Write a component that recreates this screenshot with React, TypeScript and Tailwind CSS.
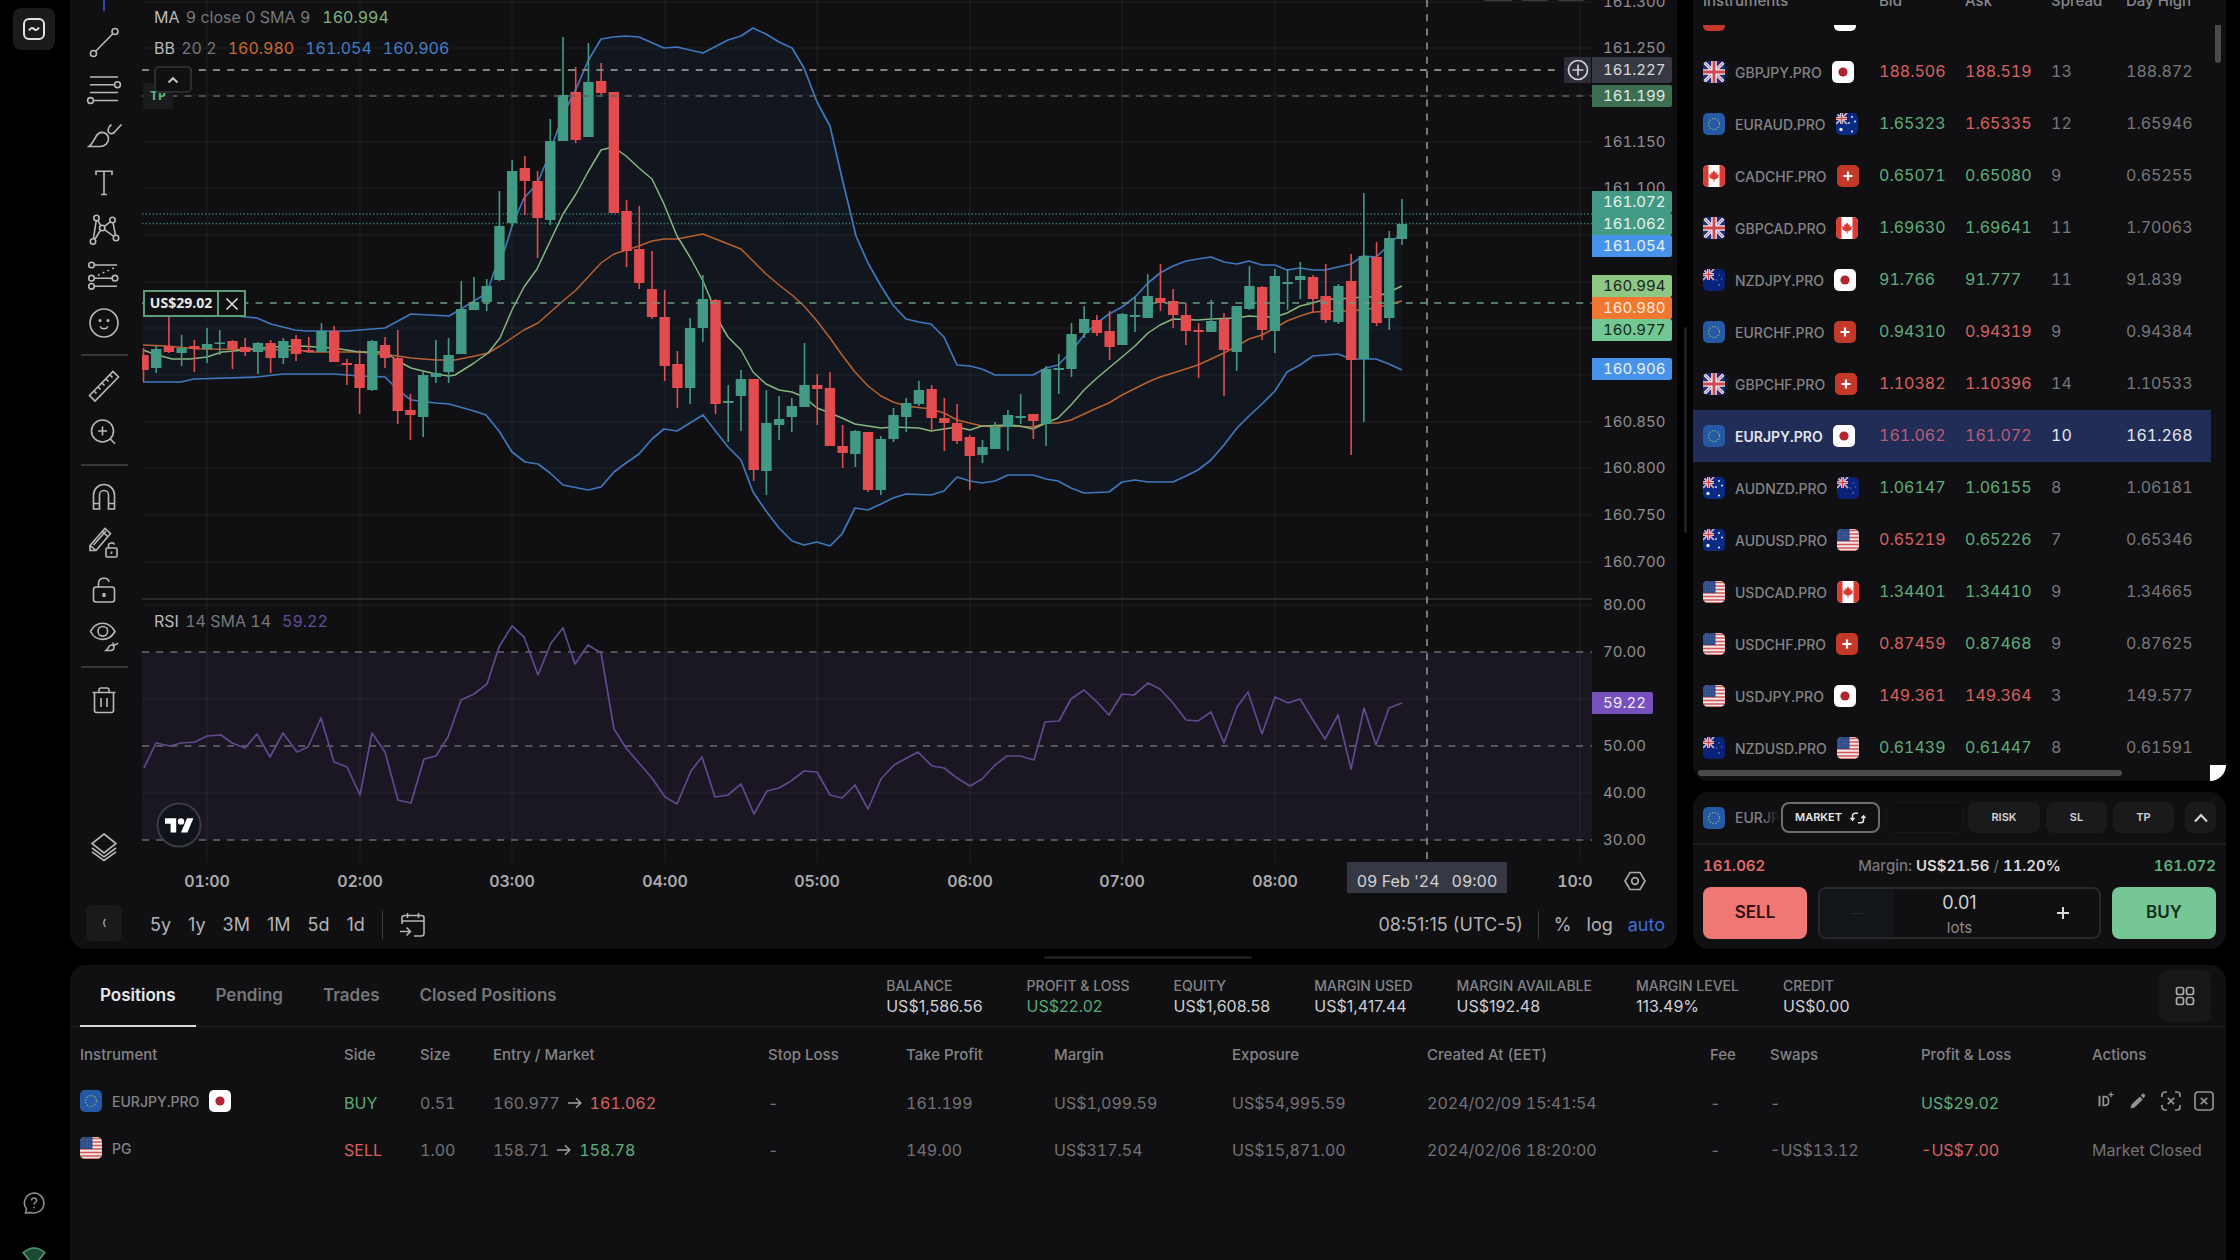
import type { ReactNode } from "react";

/* ------------------------------------------------------------------ */
/* Chart data                                                          */
/* ------------------------------------------------------------------ */

const UP = "#439a84";
const DOWN = "#e24c4f";

// [direction, body top, body bottom, wick top, wick bottom]
const candles: [0 | 1, number, number, number, number][] = [
  [0, 355, 370, 348, 382], [1, 349, 368, 346, 373], [0, 346, 352, 317, 353], [1, 348, 353, 335, 366],
  [0, 346, 349, 340, 372], [1, 344, 349, 328, 363], [1, 342.5, 344, 330, 355], [0, 341, 349, 340, 369],
  [0, 347, 352, 338, 356], [1, 343, 352, 342, 374], [0, 343, 358, 340, 373], [1, 341, 358, 338, 364],
  [0, 339, 354, 335, 361], [0, 350, 352, 337, 352], [1, 331, 352, 323, 352], [0, 331, 362, 326, 362],
  [0, 363, 365, 359, 385], [0, 364, 388, 350, 414], [1, 341, 390, 340, 391], [0, 345, 358, 337, 368],
  [0, 358, 411, 330, 424], [0, 410, 415, 394, 440], [1, 375, 417, 372, 437], [1, 373, 377, 340, 383],
  [1, 355, 372, 338, 383], [1, 309, 354, 281, 354], [1, 302, 310, 277, 310], [1, 286, 302, 279, 311],
  [1, 226, 280, 191, 281], [1, 171, 223, 160, 227], [0, 168, 181, 156, 215], [0, 181, 218, 171, 258],
  [1, 141, 220, 119, 225], [1, 95, 141, 37, 141], [0, 92, 140, 67, 143], [1, 82, 137, 43, 137],
  [0, 81, 93, 63, 95], [0, 92, 213, 92, 213], [0, 211, 251, 200, 267], [0, 249, 283, 206, 289],
  [0, 289, 317, 251, 319], [0, 317, 366, 290, 381], [0, 364, 388, 351, 408], [1, 328, 388, 318, 404],
  [1, 299, 328, 275, 342], [0, 300, 404, 299, 414], [1, 401, 403, 385, 442], [1, 379, 396, 370, 431],
  [0, 379, 470, 379, 481], [1, 423, 471, 390, 495], [1, 419, 425, 396, 440], [1, 406, 417, 398, 432],
  [1, 385, 407, 343, 407], [0, 385, 389, 374, 425], [0, 388, 446, 372, 446], [0, 446, 453, 425, 468],
  [1, 431, 454, 430, 467], [0, 432, 490, 432, 492], [1, 439, 490, 436, 495], [1, 415, 439, 408, 442],
  [1, 403, 417, 398, 432], [1, 390, 404, 381, 406], [0, 389, 418, 385, 431], [0, 418, 423, 398, 451],
  [0, 423, 441, 404, 444], [0, 437, 456, 435, 490], [1, 447, 455, 440, 463], [1, 427, 449, 422, 449],
  [1, 415, 427, 410, 451], [1, 416, 418, 394, 424], [0, 414, 421, 414, 439], [1, 369, 424, 366, 446],
  [1, 368, 370, 354, 394], [1, 334, 369, 323, 377], [1, 319, 333, 306, 338], [0, 320, 333, 315, 336],
  [0, 331, 347, 311, 360], [1, 314, 345, 313, 345], [1, 315, 317, 297, 332], [1, 296, 318, 274, 318],
  [0, 298, 303, 264, 311], [0, 301, 315, 289, 328], [0, 315, 331, 303, 345], [0, 330, 332, 323, 378],
  [1, 321, 332, 300, 332], [0, 319, 350, 313, 396], [1, 306, 352, 306, 371], [1, 286, 309, 266, 310],
  [0, 287, 330, 286, 340], [1, 276, 331, 269, 353], [1, 282, 284, 269, 310], [1, 276, 280, 262, 299],
  [0, 277, 299, 275, 313], [0, 296, 320, 264, 323], [1, 286, 322, 284, 324], [0, 281, 360, 254, 455],
  [1, 256, 359, 193, 422], [0, 257, 323, 242, 326], [1, 238, 318, 231, 330], [1, 224, 239, 199, 245],
];

const bandUpper =
  "143,313 200,313 246,317 257,318 271,324 295,330 307,331 347,331 385,328 398,321 411,314 449,316 461,309 487,293 494,272 505,249 512,226 524,198 537,184 545,165 563,115 576,89 588,61 601,39 613,37 626,36 639,37 664,48 677,47 703,53 728,40 741,36 753,28 766,34 779,42 792,48 804,68 817,102 830,126 842,178 856,236 868,263 881,286 893,305 906,319 919,322 931,324 944,337 957,365 970,366 982,369 995,375 1033,375 1046,368 1058,365 1071,352 1084,335 1097,323 1109,314 1122,307 1135,297 1148,283 1160,273 1173,266 1186,261 1198,259 1211,257 1224,262 1237,264 1249,261 1262,265 1275,265 1287,270 1300,268 1313,270 1325,270 1338,267 1351,264 1363,256 1376,257 1389,245 1402,232";
const bandLower =
  "1402,370 1389,364 1376,359 1351,359 1338,354 1313,356 1300,365 1287,372 1275,391 1262,404 1249,416 1237,428 1224,445 1211,460 1198,470 1186,476 1173,482 1148,482 1135,480 1122,482 1109,492 1084,493 1071,488 1058,481 1046,479 1033,475 1008,475 995,481 982,483 970,481 957,477 944,491 931,495 906,494 893,498 881,504 868,510 855,508 842,534 830,546 817,542 804,545 792,541 779,528 766,511 753,492 741,460 728,447 703,415 677,431 664,429 652,439 639,454 626,463 614,472 601,487 588,490 563,485 550,473 538,464 525,462 512,452 499,431 486,415 474,411 449,404 436,403 411,400 398,390 385,377 359,376 334,374 283,374 257,377 194,379 181,382 143,382";
const basisLine =
  "143,345 166,346 200,349 300,350 308,352 360,352 398,356 411,358 436,360 455,360 475,356 488,353 500,346 524,330 538,323 563,301 576,290 601,263 614,254 639,246 652,241 664,239 677,239 703,234 741,249 766,274 779,285 792,295 804,306 817,321 830,338 842,355 855,372 868,386 881,396 893,402 906,406 931,409 944,413 957,420 982,426 995,427 1008,426 1033,427 1046,423 1058,423 1071,420 1084,414 1097,408 1109,403 1122,395 1148,382 1160,377 1173,373 1198,365 1224,353 1237,346 1249,339 1262,335 1275,328 1287,321 1300,316 1313,312 1338,311 1351,311 1376,308 1389,304 1402,301";
const averageLine =
  "143,350 154,354 172,359 190,359 207,357 222,352 245,350 270,347 300,346 334,348 359,352 385,352 398,361 411,368 423,371 436,374 449,376 455,375 474,363 488,353 500,338 512,310 524,287 537,269 563,214 576,194 588,172 601,150 609,148 619,151 626,156 639,168 652,179 664,204 677,236 690,257 703,281 711,300 721,325 728,337 741,350 753,372 766,384 779,390 792,392 804,397 817,408 830,413 842,418 855,424 868,426 881,428 893,427 919,428 931,431 944,429 957,427 970,430 982,426 1008,425 1020,426 1033,429 1046,423 1058,418 1071,405 1084,390 1097,378 1122,357 1135,346 1148,333 1160,325 1173,319 1198,320 1211,319 1237,318 1249,316 1262,317 1275,317 1287,313 1300,306 1313,303 1325,299 1338,299 1363,297 1376,297 1389,292 1402,286";
const rsiLine =
  "144,768 156,743 170,746 181,743 195,742 207,736 221,735 232,743 245,748 257,734 270,757 283,733 297,752 308,747 321,718 334,762 347,767 360,795 372,733 385,752 398,800 411,803 424,759 436,756 448,737 461,700 474,694 487,684 499,647 512,626 524,637 538,675 551,643 563,628 575,664 588,645 601,653 614,729 626,748 639,763 652,778 665,797 677,804 691,771 702,757 715,797 728,795 741,784 754,814 767,791 779,788 791,781 804,771 817,772 830,795 842,798 855,785 868,809 881,779 894,765 918,752 932,766 944,768 957,778 970,786 982,779 995,765 1007,756 1020,756 1034,760 1045,722 1059,721 1071,699 1084,690 1097,702 1109,715 1122,694 1134,695 1148,683 1160,689 1173,703 1186,720 1198,721 1211,712 1224,743 1237,707 1248,692 1262,734 1275,697 1288,703 1300,699 1313,720 1325,739 1338,715 1351,769 1364,708 1376,745 1389,708 1402,703";

const hourLines = [207, 360, 512, 665, 817, 970, 1122, 1275, 1580];
const priceLines = [2, 48, 95, 142, 188, 235, 282, 328, 375, 422, 468, 515, 562];

const priceTicks: [string, number][] = [
  ["161.300", 2], ["161.250", 48], ["161.150", 142], ["161.100", 188], ["160.850", 422],
  ["160.800", 468], ["160.750", 515], ["160.700", 562], ["80.00", 605], ["70.00", 652],
  ["50.00", 746], ["40.00", 793], ["30.00", 840],
];

const priceTags: [string, number, string][] = [
  ["161.227", 57, "h-[26px] w-[80px] bg-[#363843] text-[#d8d8da]"],
  ["161.199", 85, "h-[22px] w-[80px] bg-[#3d6e51] text-[#dfe9e2]"],
  ["161.072", 191, "h-[22px] w-[80px] bg-[#439a84] text-[#e6f2ee]"],
  ["161.062", 213, "h-[22px] w-[80px] bg-[#439a84] text-[#e6f2ee]"],
  ["161.054", 235, "h-[22px] w-[80px] bg-[#4793ea] text-[#e6effb]"],
  ["160.994", 275, "h-[22px] w-[80px] bg-[#8fc784] text-[#17251a]"],
  ["160.980", 297, "h-[22px] w-[80px] bg-[#f0772f] text-[#fdeadf]"],
  ["160.977", 319, "h-[22px] w-[80px] bg-[#72c792] text-[#12271b]"],
  ["160.906", 358, "h-[22px] w-[80px] bg-[#4793ea] text-[#e6effb]"],
  ["59.22", 692, "h-[22px] w-[61px] bg-[#7650bb] text-[#efe9f9]"],
];

const timeTicks: [string, number][] = [
  ["01:00", 207], ["02:00", 360], ["03:00", 512], ["04:00", 665], ["05:00", 817],
  ["06:00", 970], ["07:00", 1122], ["08:00", 1275], ["10:00", 1580],
];

/* ------------------------------------------------------------------ */
/* Flags                                                               */
/* ------------------------------------------------------------------ */

type Code = "GBP" | "JPY" | "EUR" | "AUD" | "CAD" | "CHF" | "NZD" | "USD" | "CNY";

function Jack() {
  return (
    <g>
      <path d="M0 0l22 22M22 0L0 22" stroke="#d9d3e6" strokeWidth="3.4" />
      <path d="M0 0l22 22M22 0L0 22" stroke="#c0778f" strokeWidth="1" />
      <path d="M11 0v22M0 11h22" stroke="#f2e8ee" strokeWidth="5.6" />
      <path d="M11 0v22M0 11h22" stroke="#d2484f" strokeWidth="2.800" />
    </g>
  );
}

const flagArt: Record<Code, ReactNode> = {
  GBP: (
    <>
      <rect width="22" height="22" fill="#1d2a78" />
      <Jack />
    </>
  ),
  JPY: (
    <>
      <rect width="22" height="22" fill="#fff" />
      <circle cx="11" cy="11" r="4.6" fill="#b0252f" />
    </>
  ),
  EUR: (
    <>
      <rect width="22" height="22" fill="#2559a6" />
      <circle cx="11" cy="11" r="5.5" fill="none" stroke="#7fae7c" strokeWidth="1.4" strokeDasharray="1.3 1.58" />
    </>
  ),
  AUD: (
    <>
      <rect width="22" height="22" fill="#0a2a83" />
      <g transform="scale(.5)"><Jack /></g>
      <g fill="#dfe6f7">
        <circle cx="5" cy="16.5" r="1.7" /><circle cx="16" cy="4" r="1" /><circle cx="19" cy="8.5" r="1" />
        <circle cx="13" cy="10" r=".9" /><circle cx="16" cy="18.5" r="1.1" />
      </g>
    </>
  ),
  NZD: (
    <>
      <rect width="22" height="22" fill="#0a237a" />
      <g transform="scale(.5)"><Jack /></g>
      <g fill="#5a6fc0">
        <circle cx="16" cy="6" r=".8" /><circle cx="18.5" cy="10" r=".8" /><circle cx="13.5" cy="11" r=".8" /><circle cx="16" cy="16" r=".9" />
      </g>
    </>
  ),
  CAD: (
    <>
      <rect width="22" height="22" fill="#fff" />
      <path d="M0 0h5.500v22H0zM16.500 0H22v22h-5.500z" fill="#dc3a31" />
      <path d="M11 5.500l1.500 2.300 1.500-.6-.3 2.500 2.500-.5-.9 2 .7 1-3.400 2h-1.100v2.200h-1v-2.200H9.400l-3.400-2 .7-1-.9-2 2.500.5L8 7.200l1.500.6z" fill="#dc3a31" />
    </>
  ),
  CHF: (
    <>
      <rect width="22" height="22" fill="#c4382a" />
      <path d="M11 6.500v9M6.500 11h9" stroke="#fff" strokeWidth="2.200" />
    </>
  ),
  USD: (
    <>
      <rect width="22" height="22" fill="#f3e6e6" />
      <path d="M0 1.500h22M0 5h22M0 8.500h22M0 12h22M0 15.500h22M0 19h22M0 22h22" stroke="#d2565a" strokeWidth="1.700" />
      <rect width="12.500" height="12" fill="#2d4c87" />
      <path d="M2 3h9M2 6h9M2 9h9" stroke="#5f7db3" strokeWidth="1" strokeDasharray="1 1.500" />
    </>
  ),
  CNY: <rect width="22" height="22" fill="#c4382a" />,
};

function Flag({ code }: { code: Code }) {
  return (
    <svg viewBox="0 0 22 22" className="size-[22px] shrink-0 rounded-[5px]" aria-hidden="true">
      {flagArt[code]}
    </svg>
  );
}

/* ------------------------------------------------------------------ */
/* Drawing toolbar                                                     */
/* ------------------------------------------------------------------ */

function ToolIcon({ children }: { children: ReactNode }) {
  return (
    <svg
      viewBox="-18 -18 36 36"
      className="size-9 overflow-visible"
      fill="none"
      stroke="currentColor"
      strokeWidth="1.6"
      aria-hidden="true"
    >
      {children}
    </svg>
  );
}

const drawTools: [string, ReactNode][] = [
  ["Trend line", <><circle cx="11" cy="-11.500" r="3" /><circle cx="-10.500" cy="10.500" r="3" /><path d="M8.800-9.300L-8.300 8.300" /></>],
  ["Fib retracement", <><path d="M-14-13h28M-14-5.300H10.500M-14 2.500h28M-10.500 10.500H14" /><circle cx="13.500" cy="-5.300" r="2.900" /><circle cx="-13.500" cy="10.500" r="2.900" /></>],
  ["Brush", <><path d="M-15 10.500C-9.500 6.500-10 1-5.500-2.500-1-5.500 4.500-2 4.500 2.500 4.500 7.500.500 10.500-4 10.500z" /><path d="M7.500-11.500C3.500-9 3-3.500 6.500-2.500 8.500-2 10-3 11-4.500L17.500-11.500" /></>],
  ["Text", <path d="M-8-8v-3.800H8V-8M0-11.800V11.500M-3 11.500H3" />],
  ["XABCD pattern", <><circle cx="-7.500" cy="-12" r="2.700" /><circle cx="8.500" cy="-10" r="2.700" /><circle cx="-1.800" cy="-2" r="2.700" /><circle cx="12" cy="8" r="2.700" /><circle cx="-11" cy="11.500" r="2.700" /><path d="M-7.800-9.300L-10.600 8.800M-6.200-9.600L-3.200-4.400M.300-3.700L6.500-8.400M9-7.300L11.500 5.300M.400-.400L9.800 6.300M-3.500 0L-9.200 9.500" /></>],
  ["Projection", <><circle cx="-12.500" cy="-11" r="2.800" /><circle cx="-12.500" cy="2.200" r="2.800" /><circle cx="11" cy="2.200" r="2.800" /><circle cx="-12.500" cy="10.300" r="2.800" /><path d="M-9.700-11H13M-9.700 2.200H8.200M-9.700 10.300H13" /><path d="M-6-.800L12-9" strokeDasharray="1.800 3.400" /></>],
  ["Emoji", <><circle r="14" /><circle cx="-4" cy="-2.500" r=".8" fill="currentColor" /><circle cx="4" cy="-2.500" r=".8" fill="currentColor" /><path d="M-4 3.500C-2.500 6.500 2.500 6.500 4 3.500" /></>],
];

const measureTools: [string, ReactNode][] = [
  ["Measure", <path d="M-14.500 8.500L9-15.500 14.500-10-9 14zM-10 4l2.500 2.500M-6 0l2.500 2.500M-2-4L.500-1.500M2-8L4.500-5.500M6-12l2.500 2.500" />],
  ["Zoom in", <><circle cx="-1.500" cy="-2" r="11" /><path d="M6.300 6L11 10.800M-6-2h9M-1.500-6.500v9" /></>],
];

const modeTools: [string, ReactNode][] = [
  ["Magnet mode", <path d="M-10.500 12V-2a10.500 10.500 0 0 1 21 0v14H4.500V-2a4.500 4.500 0 0 0-9 0v14zM-10.500 6.500h6M4.500 6.500h6" />],
  ["Stay in drawing mode", <><path d="M-14 2.500L1-14.500 6.500-9.500-8 7.500-14 7.500zM-10.500 2L2-12M-14 2.500L-8 7.500M-1.500-11.500L3.500-6.500" /><rect x="2" y="5" width="11" height="9" rx="1" /><path d="M4.500 5V2.500C4.500-.500 9.500-1 10.500 1.500M7.500 8.500v2.500" /></>],
  ["Lock drawings", <><rect x="-10.500" y="-2" width="21" height="15" rx="2.500" /><path d="M-5.500-2V-5.500C-5.500-12 4-12.500 5-7" /><path d="M0 4v4" strokeWidth="3" /></>],
  ["Hide drawings", <><path d="M-13.500-3.500C-8-14.500 5-14.500 11-3.500 5 7-8 7-13.500-3.500z" /><circle cx="-1.200" cy="-3.700" r="4.800" /><path d="M2 15.500C5 13 4.500 9.500 8 10c3.500.500 2 5.500-1 5.500zM9 7.500C9 10.500 11 11 14 8" /></>],
];

function ToolButton({ tool }: { tool: [string, ReactNode] }) {
  return (
    <button type="button" aria-label={tool[0]} className="flex h-[46px] w-12 items-center justify-center">
      <ToolIcon>{tool[1]}</ToolIcon>
    </button>
  );
}

function Toolbar() {
  return (
    <div className="flex w-[72px] shrink-0 flex-col items-center pr-1 text-[#b9b9bc]">
      <div className="flex h-5 items-start">
        <div className="h-[11px] w-[2px] bg-[#2c46b4]" />
      </div>
      <div className="flex h-[326px] flex-col justify-between">
        {drawTools.map((t) => <ToolButton key={t[0]} tool={t} />)}
      </div>
      <div className="my-2 h-[2px] w-[47px] bg-[#38383b]" />
      {measureTools.map((t) => <ToolButton key={t[0]} tool={t} />)}
      <div className="my-2 h-[2px] w-[47px] bg-[#38383b]" />
      {modeTools.map((t) => <ToolButton key={t[0]} tool={t} />)}
      <div className="my-2 h-[2px] w-[47px] bg-[#38383b]" />
      <ToolButton
        tool={["Remove drawings", <><path d="M-9.500-6v17.500a2 2 0 0 0 2 2h15a2 2 0 0 0 2-2V-6M-11.500-6.500h23M-5-6.500V-9a2 2 0 0 1 2-2h6a2 2 0 0 1 2 2v2.500M-3-1v9M3-1v9" /></>]}
      />
      <div className="mt-auto">
        <ToolButton
          tool={["Object tree", <path d="M0-13L12-3.500 0 6-12-3.500zM-12 1L0 9.800 12 1M-12 4.800L0 13.500 12 4.800" />]}
        />
      </div>
      <button
        type="button"
        aria-label="Collapse toolbar"
        className="mt-[35px] mb-2 flex size-9 items-center justify-center rounded-md bg-[#1a1a1d] text-[#9a9a9d]"
      >
        <svg viewBox="0 0 10 10" className="size-[10px]" fill="none" stroke="currentColor" strokeWidth="1.4" aria-hidden="true">
          <path d="M6.500 1Q3 5 6.500 9" />
        </svg>
      </button>
    </div>
  );
}

/* ------------------------------------------------------------------ */
/* Chart                                                               */
/* ------------------------------------------------------------------ */

function Plot() {
  return (
    <svg viewBox="142 0 1450 862" preserveAspectRatio="none" className="absolute inset-0 h-full w-full" role="img" aria-label="EURJPY price and RSI">
      <rect x="142" y="652" width="1450" height="188" fill="#1a1723" />
      <g stroke="#ffffff" strokeOpacity=".045" strokeWidth="1.500">
        {hourLines.map((x) => <path key={x} d={`M${x} 0V862`} />)}
        {priceLines.map((y) => <path key={y} d={`M142 ${y}H1592`} />)}
        <path d="M142 605H1592M142 699H1592M142 793H1592" />
      </g>
      <path d="M142 599H1592" stroke="#29292c" strokeWidth="2" />
      <polygon points={`${bandUpper} ${bandLower}`} fill="#2f80ed" fillOpacity=".055" />
      <g fill="none" strokeWidth="1.700" strokeLinejoin="round">
        <polyline points={bandUpper} stroke="#3f78bd" />
        <polyline points={bandLower} stroke="#3f78bd" />
      </g>
      <g stroke="#2f7566" strokeWidth="1.500" strokeDasharray="1.500 2">
        <path d="M142 214H1592M142 223.500H1592" />
      </g>
      <g fill="none" strokeWidth="1.500" strokeLinejoin="round">
        <polyline points={basisLine} stroke="#b9622f" />
        <polyline points={averageLine} stroke="#86b681" />
      </g>
      {candles.map(([up, top, bottom, high, low], i) => {
        const x = 143.500 + i * 12.712;
        const color = up ? UP : DOWN;
        return (
          <g key={i} fill={color}>
            <rect x={x - 0.8} y={high} width="1.600" height={low - high} />
            <rect x={x - 5.2} y={top} width="10.400" height={bottom - top} />
          </g>
        );
      })}
      <path d="M142 96H1592" stroke="#5b635f" strokeWidth="1.400" strokeDasharray="7 7.200" />
      <path d="M142 303H1592" stroke="#6b9a7d" strokeWidth="1.500" strokeDasharray="7 7.200" />
      <path d="M142 652H1592M142 746H1592M142 840H1592" stroke="#69696f" strokeWidth="1.700" strokeDasharray="7 7.200" />
      <polyline points={rsiLine} fill="none" stroke="#62498f" strokeWidth="1.700" strokeLinejoin="round" />
      <path d="M142 70H1562M1427 0V862" stroke="#838386" strokeWidth="1.800" strokeDasharray="7 7.200" />
      <path d="M1484 0h28M1522 0h26M1558 0h26" stroke="#3a3a3d" strokeWidth="2" />
    </svg>
  );
}

function Legend() {
  return (
    <div className="absolute top-0 left-3 flex flex-col items-start text-base text-[#77777b] tabular-nums">
      <div className="mt-[5px] flex h-6 items-center gap-3">
        <span><span className="mr-[2px] text-[#b9b9bd]">MA</span> 9 close 0 SMA 9</span>
        <span className="text-[#7fb47c]">160.994</span>
      </div>
      <div className="mt-[7px] flex h-6 items-center gap-[11px]">
        <span><span className="mr-[2px] text-[#b9b9bd]">BB</span> 20 2</span>
        <span className="text-[#c66a31]">160.980</span>
        <span className="text-[#437fc8]">161.054</span>
        <span className="text-[#437fc8]">160.906</span>
      </div>
      <button
        type="button"
        aria-label="Collapse legend"
        className="mt-[6px] flex h-[27px] w-[38px] items-center justify-center rounded-[5px] border-2 border-[#2c2c2f] bg-[#101012] text-[#c4c4c6]"
      >
        <svg viewBox="0 0 12 8" className="h-2 w-3" fill="none" stroke="currentColor" strokeWidth="2" aria-hidden="true">
          <path d="M1.500 6.500L6 2.200l4.500 4.300" />
        </svg>
      </button>
    </div>
  );
}

function ChartPanel() {
  return (
    <section className="flex min-w-0 flex-1 rounded-b-2xl bg-[#101012]">
      <Toolbar />
      <div className="flex min-w-0 flex-1 flex-col">
        <div className="flex h-[862px]">
          <div className="relative min-w-0 flex-1 overflow-hidden">
            <Plot />
            <div className="absolute top-[83px] left-px flex h-[26px] w-[30px] items-center justify-center bg-[#1b1b1e] font-['Open_Sans'] text-[13px] font-bold text-[#5fb180]">
              TP
            </div>
            <Legend />
            <div className="absolute top-[290px] left-px flex h-[27px] w-[103px] border-2 border-[#5b9c79] bg-[#101012] text-[#e8e8ea]">
              <span className="flex flex-1 items-center justify-center pb-px font-['Open_Sans'] text-sm font-bold">US$29.02</span>
              <button type="button" aria-label="Close position" className="flex w-[27px] items-center justify-center border-l-2 border-[#5b9c79]">
                <svg viewBox="0 0 14 14" className="size-[14px]" stroke="currentColor" strokeWidth="1.500" aria-hidden="true">
                  <path d="M1.500 1.500l11 11M12.500 1.500l-11 11" />
                </svg>
              </button>
            </div>
            <div className="absolute top-[609px] left-3 flex h-6 items-center gap-[11px] text-base text-[#77777b] tabular-nums">
              <span><span className="mr-[2px] text-[#b9b9bd]">RSI</span> 14 SMA 14</span>
              <span className="text-[#654d9c]">59.22</span>
            </div>
            <svg viewBox="0 0 46 46" className="absolute top-[802px] left-[14px] size-[46px]" aria-label="TradingView" role="img">
              <circle cx="23" cy="23" r="21.500" fill="#10141a" stroke="#3b3b42" strokeWidth="2" />
              <g fill="#fff" transform="translate(9 13) scale(.8)">
                <path d="M14 22H7V11H0V4h14v18zM28 22h-8l7.500-18h8L28 22z" />
                <circle cx="20" cy="8" r="4" />
              </g>
            </svg>
            <button
              type="button"
              aria-label="Add at price"
              className="absolute top-[57px] right-px flex h-[26px] w-[27px] items-center justify-center rounded-l-xs bg-[#2c2d36] text-[#cfcfd3]"
            >
              <svg viewBox="0 0 22 22" className="size-[22px]" fill="none" stroke="currentColor" strokeWidth="1.700" aria-hidden="true">
                <circle cx="11" cy="11" r="9.500" />
                <path d="M11 5.500v11M5.500 11h11" />
              </svg>
            </button>
          </div>
          <div className="relative w-[85px] shrink-0 overflow-hidden text-[15px] tabular-nums">
            {priceTicks.map(([label, y]) => (
              <span key={label} className="absolute left-[11px] flex h-6 items-center text-[#8e8e92]" style={{ top: y - 12 }}>
                {label}
              </span>
            ))}
            {priceTags.map(([label, y, look]) => (
              <span key={label} className={`absolute left-0 flex items-center rounded-r-xs pl-[11px] ${look}`} style={{ top: y }}>
                {label}
              </span>
            ))}
          </div>
        </div>
        <div className="flex h-10">
          <div className="relative min-w-0 flex-1 overflow-hidden text-base font-semibold text-[#aaaaad] tabular-nums">
            {timeTicks.map(([label, x]) => (
              <span
                key={label}
                className="absolute top-[7px] w-14 -translate-x-1/2 text-center leading-6"
                style={{ left: `${((x - 142) / 1450) * 100}%` }}
              >
                {label}
              </span>
            ))}
            <span className="absolute top-0 right-[85px] flex h-[31px] w-[160px] items-center justify-center gap-3 bg-[#363843] pt-[6px] font-normal text-[#d2d2d5]">
              <span>09 Feb &apos;24</span>
              <span>09:00</span>
            </span>
          </div>
          <button type="button" aria-label="Chart settings" className="flex h-[38px] w-[85px] items-center justify-center text-[#aaaaad]">
            <svg viewBox="0 0 22 20" className="h-5 w-[22px]" fill="none" stroke="currentColor" strokeWidth="1.700" aria-hidden="true">
              <path d="M6 1.500h10L21 10l-5 8.500H6L1 10z" />
              <circle cx="11" cy="10" r="3.300" />
            </svg>
          </button>
        </div>
        <div className="flex h-[46px] items-center justify-between pr-3 pl-2 text-lg text-[#b4b4b7]">
          <div className="flex items-center gap-[17px]">
            {["5y", "1y", "3M", "1M", "5d", "1d"].map((r) => (
              <button key={r} type="button">{r}</button>
            ))}
            <div className="h-7 w-px bg-[#3c3c3f]" />
            <button type="button" aria-label="Go to date">
              <svg viewBox="0 0 26 26" className="size-[26px]" fill="none" stroke="currentColor" strokeWidth="1.600" aria-hidden="true">
                <path d="M2 12V6a2.500 2.500 0 0 1 2.500-2.500h17A2.500 2.500 0 0 1 24 6v15.500a2.500 2.500 0 0 1-2.500 2.500H14M2 9h22M7.500 1v5M18.500 1v5M0 19.500h10M6.500 15.500l4 4-4 4" />
              </svg>
            </button>
          </div>
          <div className="flex items-center gap-[15px]">
            <span>08:51:15 (UTC-5)</span>
            <div className="h-7 w-px bg-[#3c3c3f]" />
            <button type="button">%</button>
            <button type="button">log</button>
            <button type="button" className="text-[#3a70dc]">auto</button>
          </div>
        </div>
      </div>
    </section>
  );
}

/* ------------------------------------------------------------------ */
/* Watch list                                                          */
/* ------------------------------------------------------------------ */

const G = "text-[#5cae7b]";
const R = "text-[#d86061]";

const quotes: [Code, Code, string, string, string, string, string, string][] = [
  ["GBP", "JPY", "188.506", R, "188.519", R, "13", "188.872"],
  ["EUR", "AUD", "1.65323", G, "1.65335", R, "12", "1.65946"],
  ["CAD", "CHF", "0.65071", G, "0.65080", G, "9", "0.65255"],
  ["GBP", "CAD", "1.69630", G, "1.69641", G, "11", "1.70063"],
  ["NZD", "JPY", "91.766", G, "91.777", G, "11", "91.839"],
  ["EUR", "CHF", "0.94310", G, "0.94319", R, "9", "0.94384"],
  ["GBP", "CHF", "1.10382", R, "1.10396", R, "14", "1.10533"],
  ["EUR", "JPY", "161.062", "text-[#b65f76]", "161.072", "text-[#b65f76]", "10", "161.268"],
  ["AUD", "NZD", "1.06147", G, "1.06155", G, "8", "1.06181"],
  ["AUD", "USD", "0.65219", R, "0.65226", G, "7", "0.65346"],
  ["USD", "CAD", "1.34401", G, "1.34410", G, "9", "1.34665"],
  ["USD", "CHF", "0.87459", R, "0.87468", G, "9", "0.87625"],
  ["USD", "JPY", "149.361", R, "149.364", R, "3", "149.577"],
  ["NZD", "USD", "0.61439", G, "0.61447", G, "8", "0.61591"],
];

function WatchList() {
  return (
    <section className="relative h-[781px] overflow-hidden rounded-b-2xl bg-[#101012]">
      <div className="relative z-10 h-[25px] bg-[#101012]" />
      <table className="relative -mt-[41px] w-[518px] table-fixed text-[#77777a] tabular-nums">
        <colgroup>
          <col className="w-[186px]" />
          <col className="w-[86px]" />
          <col className="w-[86px]" />
          <col className="w-[75px]" />
          <col className="w-[85px]" />
        </colgroup>
        <thead className="relative z-20 bg-[#101012] text-left text-[15px] text-[#88888b]">
          <tr className="h-[41px]">
            {["Instruments", "Bid", "Ask", "Spread", "Day High"].map((h, i) => (
              <th key={h} scope="col" className={i === 0 ? "pt-[6px] pb-3 pl-[10px] font-medium" : "pt-[6px] pb-3 font-medium"}>{h}</th>
            ))}
          </tr>
        </thead>
        <tbody className="text-base">
          <tr className="h-[21px]">
            <td className="p-0 align-top">
              <span className="flex h-[6px] items-end overflow-hidden pl-[10px]">
                <Flag code="CNY" />
                <span className="ml-[109px] flex"><Flag code="JPY" /></span>
              </span>
            </td>
            <td colSpan={4} />
          </tr>
          {quotes.map(([a, b, bid, bidTone, ask, askTone, spread, high]) => {
            const active = a === "EUR" && b === "JPY";
            return (
              <tr key={a + b} className={active ? "h-[52px] bg-[#212c57] text-[#e3e5ee]" : "h-[52px]"}>
                <td className="p-0">
                  <span className="flex items-center pl-[10px]">
                    <Flag code={a} />
                    <span className={active ? "mx-[10px] text-[14px] font-semibold" : "mx-[10px] text-[14px] font-medium text-[#838386]"}>
                      {a}{b}.PRO
                    </span>
                    <Flag code={b} />
                  </span>
                </td>
                <td className={`pb-[2px] ${bidTone}`}>{bid}</td>
                <td className={`pb-[2px] ${askTone}`}>{ask}</td>
                <td className="pb-[2px]">{spread}</td>
                <td className="pb-[2px]">{high}</td>
              </tr>
            );
          })}
        </tbody>
      </table>
      <div className="absolute top-[19px] right-[5px] h-11 w-[6px] rounded-full bg-[#4b4b4e]" />
      <div className="absolute bottom-[5px] left-[5px] h-[6px] w-[424px] rounded-full bg-[#4b4b4e]" />
      <div className="absolute right-0 bottom-0 size-4 bg-white" />
    </section>
  );
}

/* ------------------------------------------------------------------ */
/* Order ticket                                                        */
/* ------------------------------------------------------------------ */

function OrderTicket() {
  return (
    <section className="mt-[11px] flex flex-1 flex-col rounded-2xl bg-[#101012]">
      <div className="flex h-[53px] items-center border-b-2 border-[#1e1e21] px-[10px] text-[11px] font-semibold text-[#d4d4d6]">
        <Flag code="EUR" />
        <span className="relative ml-[10px] w-[44px] overflow-hidden text-[14px] font-medium whitespace-nowrap text-[#838386]">
          EURJPY.PRO
          <span className="absolute inset-0 bg-linear-to-r from-transparent from-60% to-[#101012]" />
        </span>
        <button type="button" className="ml-[2px] flex h-[31px] w-[99px] items-center justify-center gap-2 rounded-lg border-2 border-[#6e6e71] text-[#e6e6e8]">
          MARKET
          <svg viewBox="0 0 16 12" className="h-3 w-4" fill="none" stroke="currentColor" strokeWidth="1.500" aria-hidden="true">
            <path d="M8 1.200H5A2.500 2.500 0 0 0 2.500 3.700V8M.500 6l2 2.200 2-2.200M8 10.800h3a2.500 2.500 0 0 0 2.500-2.500V4M11.500 6l2-2.200 2 2.200" />
          </svg>
        </button>
        <input aria-label="Order price" readOnly className="ml-[6px] h-[31px] w-[77px] rounded-lg border border-[#18181a] bg-[#0f0f11]" />
        <button type="button" className="ml-[5px] h-[31px] w-[72px] rounded-lg bg-[#1a1a1d]">RISK</button>
        <button type="button" className="ml-[6px] h-[31px] w-[61px] rounded-lg bg-[#1a1a1d]">SL</button>
        <button type="button" className="ml-[6px] h-[31px] w-[61px] rounded-lg bg-[#1a1a1d]">TP</button>
        <button type="button" aria-label="Collapse" className="ml-auto flex size-[31px] items-center justify-center rounded-lg bg-[#1a1a1d]">
          <svg viewBox="0 0 14 10" className="h-[10px] w-[14px]" fill="none" stroke="currentColor" strokeWidth="2.200" aria-hidden="true">
            <path d="M1 8.500L7 2l6 6.500" />
          </svg>
        </button>
      </div>
      <div className="flex h-[42px] items-center justify-between px-[10px] pt-px text-[15px] tabular-nums">
        <span className="font-semibold text-[#e06a69]">161.062</span>
        <span className="text-[#77777a]">
          <span className="font-medium">Margin:</span> <span className="font-semibold text-[#d9d9db]">US$21.56</span> / <span className="font-semibold text-[#d9d9db]">11.20%</span>
        </span>
        <span className="font-semibold text-[#5cb17c]">161.072</span>
      </div>
      <div className="flex h-[52px] gap-[11px] px-[10px]">
        <button type="button" className="w-[104px] rounded-lg bg-[#ef7875] text-[17px] font-semibold text-[#32100f]">SELL</button>
        <div className="flex flex-1 overflow-hidden rounded-lg border-2 border-[#29292c]">
          <button type="button" aria-label="Decrease size" className="flex w-[73px] items-center justify-center bg-[#121519]">
            <span className="h-px w-3 bg-[#24282c]" />
          </button>
          <label className="flex min-w-0 flex-1 flex-col items-center justify-between">
            <input defaultValue="0.01" className="h-[27px] w-full bg-transparent text-center text-lg text-[#cfcfd1] outline-none" />
            <span className="text-[15px] leading-[18px] text-[#8a8a8d]">lots</span>
          </label>
          <button type="button" aria-label="Increase size" className="flex w-[73px] items-center justify-center text-[#dcdcde]">
            <svg viewBox="0 0 14 14" className="size-[14px]" stroke="currentColor" strokeWidth="2" aria-hidden="true">
              <path d="M7 1v12M1 7h12" />
            </svg>
          </button>
        </div>
        <button type="button" className="w-[104px] rounded-lg bg-[#76c796] text-[17px] font-semibold text-[#11301e]">BUY</button>
      </div>
    </section>
  );
}

/* ------------------------------------------------------------------ */
/* Positions                                                           */
/* ------------------------------------------------------------------ */

const stats: [string, string, string][] = [
  ["BALANCE", "US$1,586.56", "text-[#cfcfd2]"],
  ["PROFIT & LOSS", "US$22.02", "text-[#56a975]"],
  ["EQUITY", "US$1,608.58", "text-[#cfcfd2]"],
  ["MARGIN USED", "US$1,417.44", "text-[#cfcfd2]"],
  ["MARGIN AVAILABLE", "US$192.48", "text-[#cfcfd2]"],
  ["MARGIN LEVEL", "113.49%", "text-[#cfcfd2]"],
  ["CREDIT", "US$0.00", "text-[#cfcfd2]"],
];

const heads = [
  "Instrument", "Side", "Size", "Entry / Market", "Stop Loss", "Take Profit", "Margin",
  "Exposure", "Created At (EET)", "Fee", "Swaps", "Profit & Loss", "Actions",
];

function Arrow() {
  return (
    <svg viewBox="0 0 14 12" className="mx-2 h-3 w-[14px]" fill="none" stroke="#a0a0a3" strokeWidth="1.500" aria-hidden="true">
      <path d="M0 6h12.500M8 1.200L12.800 6 8 10.800" />
    </svg>
  );
}

const rowActions: [string, ReactNode][] = [
  ["Position ID", <><path d="M4.500 4.800v10.400" strokeWidth="2" /><path d="M8.300 5.600v8.800h2a3.200 3.200 0 0 0 3.200-3.200V8.800a3.200 3.200 0 0 0-3.200-3.200z" /><path d="M16 1.200v5M13.500 3.700h5" strokeWidth="1.300" /></>],
  ["Edit", <path d="M2.500 17.500l1-4L11.800 5.400l3 3L6.500 16.500zM12.800 4.400l1.500-1.500q1.200-.8 2.300.3t.3 2.300l-1.300 1.700z" fill="currentColor" stroke="none" />],
  ["Partial close", <><path d="M1 6V4a3 3 0 0 1 3-3h2M14 1h2a3 3 0 0 1 3 3v2M19 14v2a3 3 0 0 1-3 3h-2M6 19H4a3 3 0 0 1-3-3v-2" /><path d="M6.800 6.800l6.400 6.400M13.200 6.800l-6.400 6.400" /></>],
  ["Close", <><rect x="1" y="1" width="18" height="18" rx="3" /><path d="M6.800 6.800l6.400 6.400M13.200 6.800l-6.400 6.400" /></>],
];

function Positions() {
  return (
    <section className="flex min-h-0 flex-1 flex-col rounded-t-2xl bg-[#101012]">
      <header className="flex h-[62px] shrink-0 items-stretch border-b border-[#1e1e21] pl-[10px]">
        <nav className="flex text-[17px] font-semibold text-[#77777a]" role="tablist" aria-label="Orders">
          {["Positions", "Pending", "Trades", "Closed Positions"].map((t, i) => (
            <button
              key={t}
              type="button"
              role="tab"
              aria-selected={i === 0}
              className={i === 0 ? "-mb-px border-b-2 border-[#d9d9db] px-5 pt-[2px] text-[#e8e8ea]" : "-mb-px border-b-2 border-transparent px-5 pt-[2px]"}
            >
              {t}
            </button>
          ))}
        </nav>
        <dl className="flex flex-1 items-center justify-center gap-[44px]">
          {stats.map(([label, value, tone]) => (
            <div key={label}>
              <dt className="text-[14px] leading-5 font-medium text-[#838386]">{label}</dt>
              <dd className={`text-base leading-5 ${tone}`}>{value}</dd>
            </div>
          ))}
        </dl>
        <button type="button" aria-label="Layout" className="mt-[5px] mr-[15px] flex size-[52px] items-center justify-center rounded-lg bg-[#17171a] text-[#a9a9ac]">
          <svg viewBox="0 0 20 20" className="size-5" fill="none" stroke="currentColor" strokeWidth="1.700" aria-hidden="true">
            <rect x="1.500" y="1.500" width="7" height="7" rx="2" /><rect x="11.500" y="1.500" width="7" height="7" rx="2" />
            <rect x="1.500" y="11.500" width="7" height="7" rx="2" /><rect x="11.500" y="11.500" width="7" height="7" rx="2" />
          </svg>
        </button>
      </header>
      <table className="w-full table-fixed text-left text-base text-[#727275] tabular-nums">
        <colgroup>
          <col className="w-[274px]" /><col className="w-[76px]" /><col className="w-[73px]" /><col className="w-[275px]" />
          <col className="w-[138px]" /><col className="w-[148px]" /><col className="w-[178px]" /><col className="w-[195px]" />
          <col className="w-[283px]" /><col className="w-[60px]" /><col className="w-[151px]" /><col className="w-[171px]" />
          <col />
        </colgroup>
        <thead className="text-[15px] text-[#838386]">
          <tr className="h-[53px]">
            {heads.map((h, i) => (
              <th key={h} scope="col" className={i === 0 ? "pt-[3px] pl-[10px] font-medium" : "p-0 pt-[3px] font-medium"}>{h}</th>
            ))}
          </tr>
        </thead>
        <tbody className="[&_td]:pb-[2px]">
          <tr className="h-[47px]">
            <td>
              <span className="flex items-center pb-[3px] pl-[10px] text-[14px] font-medium text-[#838386]">
                <Flag code="EUR" /><span className="mx-[10px]">EURJPY.PRO</span><Flag code="JPY" />
              </span>
            </td>
            <td className={G}>BUY</td>
            <td>0.51</td>
            <td><span className="flex items-center">160.977<Arrow /><span className={R}>161.062</span></span></td>
            <td>-</td>
            <td>161.199</td>
            <td>US$1,099.59</td>
            <td>US$54,995.59</td>
            <td>2024/02/09 15:41:54</td>
            <td>-</td>
            <td>-</td>
            <td className={G}>US$29.02</td>
            <td>
              <span className="flex gap-[13px] pb-[3px] pl-[3px] text-[#929295]">
                {rowActions.map(([name, art]) => (
                  <button key={name} type="button" aria-label={name}>
                    <svg viewBox="0 0 20 20" className="size-5" fill="none" stroke="currentColor" strokeWidth="1.700" aria-hidden="true">{art}</svg>
                  </button>
                ))}
              </span>
            </td>
          </tr>
          <tr className="h-[47px]">
            <td>
              <span className="flex items-center pb-[3px] pl-[10px] text-[14px] font-medium text-[#838386]">
                <Flag code="USD" /><span className="mx-[10px]">PG</span>
              </span>
            </td>
            <td className={R}>SELL</td>
            <td>1.00</td>
            <td><span className="flex items-center">158.71<Arrow /><span className={G}>158.78</span></span></td>
            <td>-</td>
            <td>149.00</td>
            <td>US$317.54</td>
            <td>US$15,871.00</td>
            <td>2024/02/06 18:20:00</td>
            <td>-</td>
            <td>-US$13.12</td>
            <td className={R}>-US$7.00</td>
            <td className="whitespace-nowrap">Market Closed</td>
          </tr>
        </tbody>
      </table>
    </section>
  );
}

/* ------------------------------------------------------------------ */
/* Page                                                                */
/* ------------------------------------------------------------------ */

export default function App() {
  return (
    <div className="flex h-screen overflow-hidden bg-black font-['Inter',sans-serif]">
      <aside className="flex w-[70px] shrink-0 flex-col items-center pr-[3px]">
        <button type="button" aria-label="Trading" className="mt-2 flex size-[42px] items-center justify-center rounded-lg bg-[#1b1b1e] text-[#e2e2e4]">
          <svg viewBox="0 0 24 24" className="size-6" fill="none" stroke="currentColor" strokeWidth="2" aria-hidden="true">
            <rect x="2" y="2" width="20" height="20" rx="5" />
            <path d="M7 13.500Q9.500 9.500 12 12t5-1.500" />
          </svg>
        </button>
        <button type="button" aria-label="Help" className="mt-auto text-[#8c8c8f]">
          <svg viewBox="0 0 24 24" className="size-6" fill="none" stroke="currentColor" strokeWidth="1.600" aria-hidden="true">
            <path d="M12 2a10 10 0 1 1-3.500 19.400L3.500 22l1-4A10 10 0 0 1 12 2z" />
            <path d="M9.500 9.500c0-3.300 5-3.300 5 0 0 2-2.500 2-2.500 4.200M12 15.800v1.500" />
          </svg>
        </button>
        <svg viewBox="0 0 24 13" className="mt-8 h-[13px] w-6" fill="#1d4a35" stroke="#4f9a76" strokeWidth="1.600" role="img" aria-label="Connected">
          <path d="M1.200 5.500Q12-3.500 22.800 5.500L12 19z" />
        </svg>
      </aside>
      <main className="flex min-w-0 flex-1 flex-col pr-[14px]">
        <div className="flex h-[949px] shrink-0">
          <ChartPanel />
          <div className="flex w-4 shrink-0 justify-center">
            <div className="mt-[327px] h-[206px] w-[3px] rounded-full bg-[#1f1f21]" />
          </div>
          <div className="flex w-[533px] shrink-0 flex-col">
            <WatchList />
            <OrderTicket />
          </div>
        </div>
        <div className="flex h-4 shrink-0 items-center justify-center">
          <div className="h-[3px] w-[208px] rounded-full bg-[#1f1f21]" />
        </div>
        <Positions />
      </main>
    </div>
  );
}
